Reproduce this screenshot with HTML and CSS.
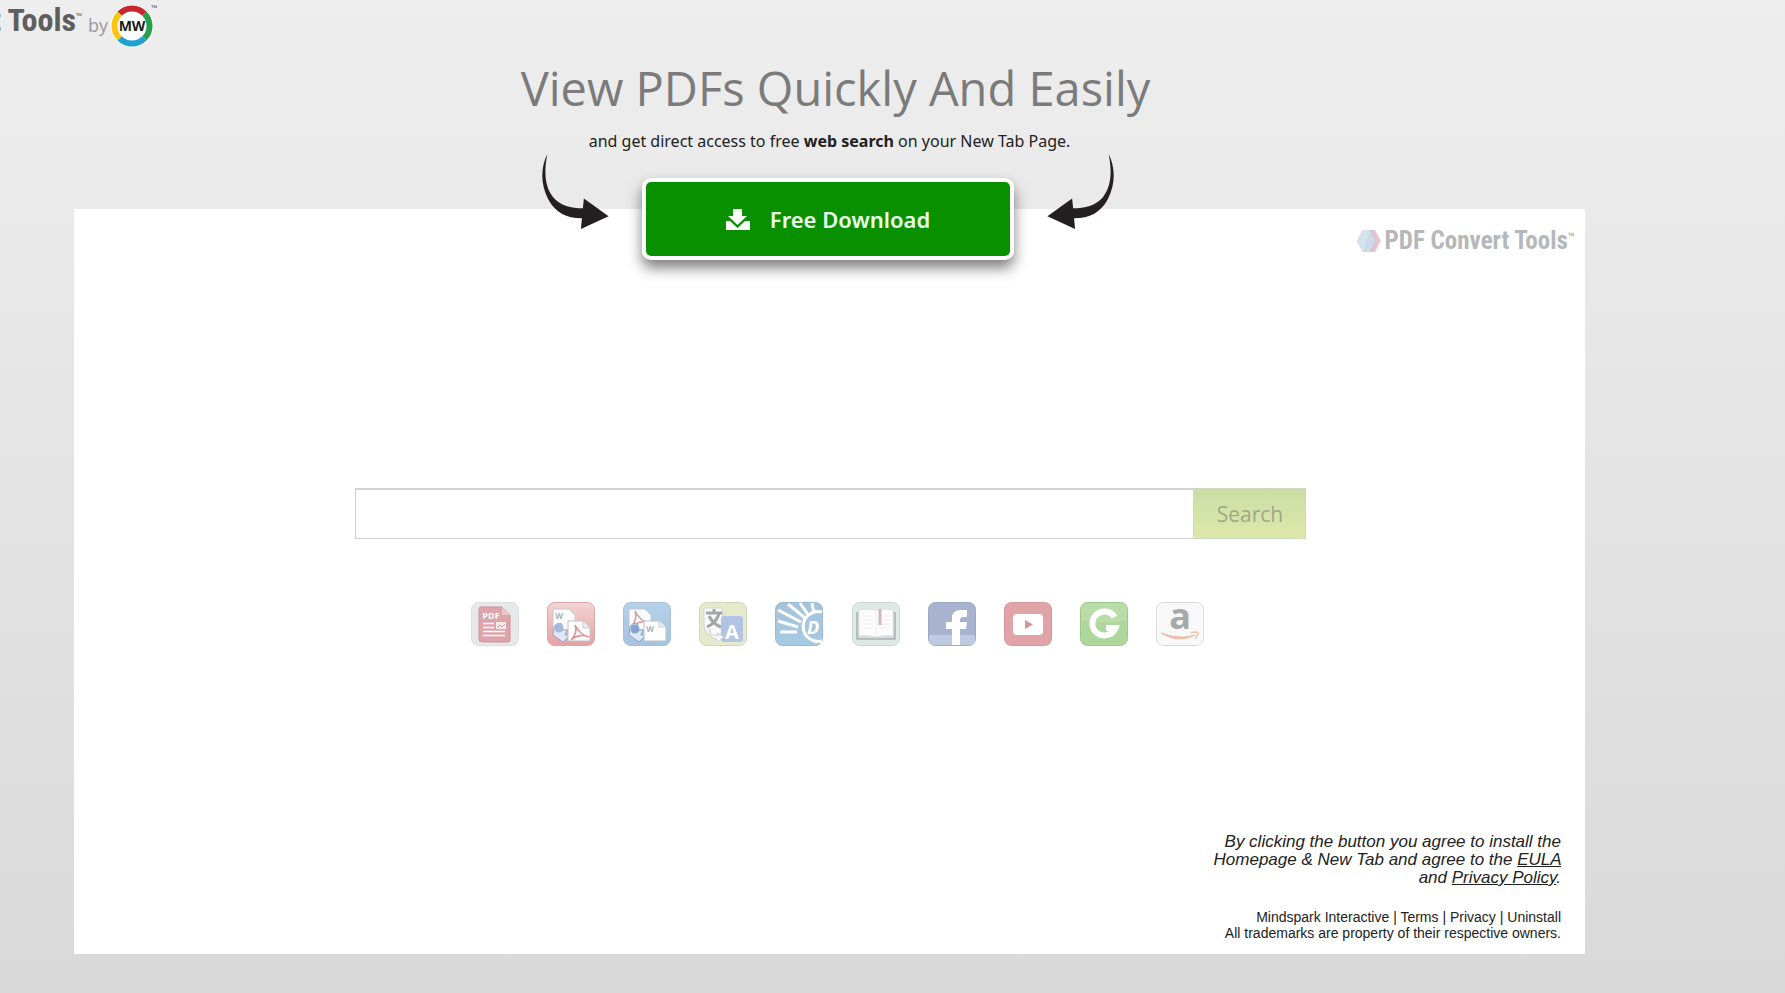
FILE: index.html
```html
<!DOCTYPE html>
<html lang="en">
<head>
<meta charset="utf-8">
<title>PDF Convert Tools</title>
<link rel="stylesheet" href="styles.css">
</head>
<body>
<header class="topbar">
  <div class="topbar-name"><span>PDF Convert Tools</span></div>
  <sup class="tm">™</sup>
  <span class="by">by</span>
  <svg class="mw" viewBox="0 0 44 44" role="img" aria-label="MW">
    <circle cx="22" cy="22" r="21.500" fill="#fff"/>
    <g fill="none" stroke-width="6">
      <path d="M9.600 9.600A17.500 17.500 0 0 1 34.400 9.600" stroke="#c9252c"/>
      <path d="M34.400 9.600A17.500 17.500 0 0 1 34.400 34.400" stroke="#2a9f4b"/>
      <path d="M34.400 34.400A17.500 17.500 0 0 1 9.600 34.400" stroke="#21a0d2"/>
      <path d="M9.600 34.400A17.500 17.500 0 0 1 9.600 9.600" stroke="#fbc40f"/>
    </g>
    <text x="22" y="27" class="mw-text">MW</text>
  </svg>
  <sup class="tm">™</sup>
</header>

<main class="page">
  <section class="hero">
    <h1 class="title">View PDFs Quickly And Easily</h1>
    <p class="subtitle">and get direct access to free <strong>web search</strong> on your New Tab Page.</p>
    <div class="cta">
      <svg class="arrow" viewBox="0 0 70 78" aria-hidden="true"><path d="M7 1C3 21 5 35 13 45C20 53 31 56 43 56L44 46L69 64L41 77L42 66C26 66 15 60 8 47C-1 30 1 13 7 1Z"/></svg>
      <button class="download" type="button">
        <svg class="download-icon" viewBox="0 0 24 21" aria-hidden="true"><path d="M7 0h9v7h5l-9.500 9L2 7h5zM0 12h4l7.500 7 7.500-7h5v9H0z"/></svg>
        <span>Free Download</span>
      </button>
      <svg class="arrow arrow-right" viewBox="0 0 70 78" aria-hidden="true"><path d="M7 1C3 21 5 35 13 45C20 53 31 56 43 56L44 46L69 64L41 77L42 66C26 66 15 60 8 47C-1 30 1 13 7 1Z"/></svg>
    </div>
  </section>

  <section class="panel">
    <div class="brand">
      <svg class="hex" viewBox="0 0 24 22" aria-hidden="true">
        <path d="M6 0H18L24 11L18 22H6L0 11Z" fill="#ebc6cc"/>
        <path d="M6 0H16L21 11L16 22H6L0 11Z" fill="#d9c3d0"/>
        <path d="M6 0H13L18 11L13 22H6L0 11Z" fill="#cbd9e9"/>
        <path d="M6 0H13L6 22L0 11Z" fill="#d5e3ef"/>
      </svg>
      <span>PDF Convert Tools</span><sup class="brand-tm">™</sup>
    </div>

    <form class="search">
      <input class="search-input" type="text" aria-label="Search the web">
      <button class="search-button" type="button">Search</button>
    </form>

    <nav class="apps" aria-label="Shortcuts">
      <a href="#" aria-label="View PDF"><svg viewBox="0 0 48 44">
        <rect x=".5" y=".5" width="47" height="43" rx="7" fill="#e7e8ea" stroke="#dcdfe1"/>
        <path d="M9 5H31L39 13V38Q39 40 37 40H11Q8 40 8 37V7Z" fill="#dda4ac" stroke="#cf929b"/>
        <path d="M31 5V13H39Z" fill="#edc8cc"/>
        <text x="20" y="17" class="i-pdf">PDF</text>
        <path d="M12 21.500H23M12 25.500H23M12 29.500H34M12 33.500H34" stroke="#fff" stroke-width="1.500"/>
        <rect x="25" y="20" width="10" height="7" fill="#f8e9eb"/><path d="M26 26L29 23L31 25L34 22" fill="none" stroke="#d9a0a8"/>
      </svg></a>
      <a href="#" aria-label="Word to PDF"><svg viewBox="0 0 48 44">
        <defs><linearGradient id="red" x2="0" y2="1"><stop stop-color="#f3d5d5"/><stop offset="1" stop-color="#e4a1a2"/></linearGradient></defs>
        <rect x=".5" y=".5" width="47" height="43" rx="7" fill="url(#red)" stroke="#dba6a8"/>
        <path d="M6 7H22L28 13V28H6Z" fill="#fbfbfc" stroke="#c9c7ca"/>
        <text x="12" y="17" class="i-w">W</text>
        <path d="M7 25Q9 20 15 22L13 28H20L18 33H23L16 40L6 33Z" fill="#dfe7f4" stroke="#9daac6"/><circle cx="12" cy="26" r="4.500" fill="#a7b9dd"/>
        <path d="M21 19H36L43 26V39H21Z" fill="#fff" stroke="#c4c0c5"/><path d="M36 19V26H43" fill="#eee" stroke="#ccc"/>
        <path d="M24 38C29 33 30 28 28 23C32 31 37 34 42 35C35 32 28 34 24 38Z" fill="none" stroke="#d99399" stroke-width="1.600"/>
      </svg></a>
      <a href="#" aria-label="PDF to Word"><svg viewBox="0 0 48 44">
        <defs><linearGradient id="blue" x2="0" y2="1"><stop stop-color="#b5d1eb"/><stop offset="1" stop-color="#a5c3e0"/></linearGradient></defs>
        <rect x=".5" y=".5" width="47" height="43" rx="7" fill="url(#blue)" stroke="#a9bed1"/>
        <path d="M6 7H22L28 13V28H6Z" fill="#fbfbfc" stroke="#c3c7cf"/>
        <path d="M8 26C13 19 14 14 12 9C16 17 21 20 26 21C19 18 12 21 8 26Z" fill="none" stroke="#d99da6" stroke-width="1.600"/>
        <path d="M7 25Q9 20 15 22L13 28H20L18 33H23L16 40L6 33Z" fill="#dce8f5" stroke="#89a3c5"/><circle cx="12" cy="27" r="4.500" fill="#87a4cf"/>
        <path d="M21 19H36L43 25V39H21Z" fill="#fff" stroke="#b9c2cc"/><path d="M36 19V25H43" fill="#eee" stroke="#ccc"/>
        <text x="27" y="30" class="i-w">W</text>
      </svg></a>
      <a href="#" aria-label="Translate"><svg viewBox="0 0 48 44">
        <rect x=".5" y=".5" width="47" height="43" rx="7" fill="#e7e9cd" stroke="#d0d6bb"/>
        <path d="M5 6H23L25 25Q26 28 22 31L16 35Q6 33 5 23Z" fill="#fafafa" stroke="#d3d6d1"/>
        <rect x="22" y="14" width="22" height="26" rx="3" fill="#b1c4e3"/>
        <path d="M7 11H23M15 7V11M20 12Q17 21 8 25M10 14Q14 22 22 25" fill="none" stroke="#a3a5a7" stroke-width="3"/>
        <path d="M11 27Q10 34 20 34L18 31L25 35L18 40V37Q9 35 11 27Z" fill="#fff" stroke="#c8cdd6" stroke-width=".8"/>
        <text x="33" y="37" class="i-a">A</text>
      </svg></a>
      <a href="#" aria-label="Dictionary"><svg viewBox="0 0 48 44">
        <defs><linearGradient id="sky" x2="0" y2="1"><stop stop-color="#a6c2dc"/><stop offset="1" stop-color="#a4cbe2"/></linearGradient></defs>
        <rect x=".5" y=".5" width="47" height="43" rx="7" fill="url(#sky)" stroke="#9ab9d0"/>
        <path d="M47 10A15 15 0 1 0 47 39" fill="none" stroke="#fff" stroke-width="3"/>
        <path d="M5 30H22M3 19L23 25M3 8L26 20M13 2L30 16M25 1L34 14M37 1L39 11" stroke="#fff" stroke-width="3"/>
        <text x="38" y="32" class="i-d">D</text>
      </svg></a>
      <a href="#" aria-label="Reference book"><svg viewBox="0 0 48 44">
        <rect x=".5" y=".5" width="47" height="43" rx="7" fill="#dfe9e5" stroke="#c6d8d1"/>
        <path d="M5 10V37H43V10" fill="#d5dbd9" stroke="#a9b2b2" stroke-width="1.500"/>
        <path d="M7 8Q17 6 24 8Q32 6 41 8V34Q32 33 24 35Q16 33 7 34Z" fill="#fdfdfd" stroke="#dcdfe0"/>
        <path d="M24 9V35M11 14H21M11 18H21M11 22H21M11 26H21M32 14H38M32 18H38M27 22H38M27 26H38" stroke="#ececef"/>
        <path d="M28 7V23" stroke="#d5b5bd" stroke-width="3"/>
      </svg></a>
      <a href="#" aria-label="Facebook"><svg viewBox="0 0 48 44">
        <rect x=".5" y=".5" width="47" height="43" rx="7" fill="#a7b3cf" stroke="#9ba9c5"/>
        <path d="M1 33H47V37Q47 43 41 43H7Q1 43 1 37Z" fill="#becae0"/>
        <path d="M24 43V27H18V20H24V16Q24 8 33 8H39V15H35Q32 15 32 18V20H39L38 27H32V43Z" fill="#fff"/>
      </svg></a>
      <a href="#" aria-label="YouTube"><svg viewBox="0 0 48 44">
        <rect x=".5" y=".5" width="47" height="43" rx="7" fill="#e0a3a7" stroke="#d0989c"/>
        <rect x="9" y="12" width="30" height="21" rx="4" fill="#fff"/><path d="M21 18L29 22.500L21 27Z" fill="#d3939a"/>
      </svg></a>
      <a href="#" aria-label="Groupon"><svg viewBox="0 0 48 44">
        <rect x=".5" y=".5" width="47" height="43" rx="7" fill="#add79c" stroke="#9fc790"/>
        <path d="M1 8Q1 1 8 1H40Q47 1 47 8V18Q24 23 1 18Z" fill="#badca9"/>
        <path d="M34.500 15A12 12 0 1 0 35.500 26H26" fill="none" stroke="#fff" stroke-width="6"/>
      </svg></a>
      <a href="#" aria-label="Amazon"><svg viewBox="0 0 48 44">
        <rect x=".5" y=".5" width="47" height="43" rx="7" fill="#f8f8f8" stroke="#dcdcdf"/>
        <text x="24" y="27" class="i-amazon">a</text>
        <path d="M5 31Q23 42 39 33Q24 38 5 31Z" fill="#edbea6" stroke="#edbea6"/><path d="M35 31Q40 29 42 31Q42 34 39 37" fill="none" stroke="#edc4af" stroke-width="1.500"/>
      </svg></a>
    </nav>

    <footer class="footer">
      <p class="agree">By clicking the button you agree to install the Homepage &amp; New Tab and agree to the <a href="#">EULA</a> and <a href="#">Privacy Policy</a>.</p>
      <p class="links"><a href="#">Mindspark Interactive</a> | <a href="#">Terms</a> | <a href="#">Privacy</a> | <a href="#">Uninstall</a><br>All trademarks are property of their respective owners.</p>
    </footer>
  </section>
</main>
</body>
</html>
```
FILE: styles.css
```css
* { box-sizing: border-box; }

body {
  margin: 0;
  min-height: 100vh;
  display: flex;
  flex-direction: column;
  background: linear-gradient(#eeeeee, #d9d9d9);
  color: #222;
  font-family: "Open Sans", "Noto Sans", sans-serif;
}

h1, p { margin: 0; }

/* Top bar */
.topbar {
  display: flex;
  align-items: flex-start;
  height: 56px;
  padding-top: 4px;
}
.topbar-name {
  display: flex;
  justify-content: flex-end;
  width: 76px;
  overflow: hidden;
  color: #5e5e5e;
  font: bold 32px/32px "Liberation Sans Narrow", "Roboto Condensed", "Liberation Sans", sans-serif;
  white-space: nowrap;
}
.tm { font-size: 8px; line-height: 8px; color: #555; }
.topbar-name + .tm { margin-top: 8px; }
.by { margin-left: 6px; font-size: 18px; line-height: 42px; color: #999; }
.mw { width: 44px; height: 44px; margin-left: 2px; }
.mw-text {
  font: bold 14px "Open Sans", sans-serif;
  text-anchor: middle;
  fill: #1b1b1b;
}
.mw + .tm { margin-left: -3px; }

/* Page column */
.page {
  flex: 1;
  display: flex;
  flex-direction: column;
  margin: 0 200px 39px 74px;
}

.hero {
  z-index: 1;
  display: flex;
  flex-direction: column;
  align-items: center;
  margin-bottom: -51px;
}
.title {
  padding-left: 12px;
  color: #7b7b7b;
  font-size: 47px;
  font-weight: 400;
  line-height: 64px;
}
.subtitle {
  margin-top: 9px;
  font-family: "Noto Sans", "Open Sans", sans-serif;
  font-size: 16px;
  line-height: 24px;
}

.cta {
  display: flex;
  align-items: flex-start;
  gap: 32px;
  margin-right: 3px;
}
.arrow { width: 70px; height: 77px; fill: #231f20; }
.arrow-right { transform: scaleX(-1); }
.download {
  display: flex;
  align-items: center;
  justify-content: center;
  gap: 20px;
  width: 372px;
  height: 82px;
  margin-top: 25px;
  border: 4px solid #fff;
  border-radius: 9px;
  background: #089000;
  box-shadow: 0 8px 14px rgba(0, 0, 0, .5);
  color: #eaffea;
  font: 600 22px/28px "Noto Sans", "Open Sans", sans-serif;
}
.download-icon { width: 24px; height: 21px; fill: #fff; }

/* Preview panel */
.panel {
  flex: 1;
  display: flex;
  flex-direction: column;
  align-items: center;
  background: #fff;
}
.brand {
  display: flex;
  align-self: flex-end;
  align-items: center;
  margin: 16px 10px 0 0;
  color: #b5b7b9;
  font: bold 25px/32px "Liberation Sans Narrow", "Roboto Condensed", "Liberation Sans", sans-serif;
}
.hex { width: 24px; height: 22px; margin-right: 4px; }
.brand-tm { align-self: flex-start; margin-top: 6px; font-size: 13px; line-height: 13px; }

.search {
  display: flex;
  width: 63%;
  height: 51px;
  margin: 231px 0 0 2px;
}
.search-input {
  flex: 1;
  min-width: 0;
  padding: 0 12px;
  border: 1px solid #d0d0d0;
  border-top: 2px solid #d3d3d3;
  border-right: 0;
  background: #fff;
  font: 20px "Open Sans", sans-serif;
}
.search-button {
  width: 113px;
  border: 1px solid #c9dcc0;
  background: linear-gradient(#cbdda5, #dfe8a9);
  color: #a0a789;
  font: 21px "Open Sans", sans-serif;
}

.apps {
  display: flex;
  justify-content: space-between;
  width: 734px;
  margin: 63px 0 0 16px;
}
.apps a, .apps svg { display: block; width: 48px; height: 44px; }
.apps svg { overflow: visible; }
.i-pdf { font: bold 9px "Open Sans", sans-serif; text-anchor: middle; fill: #fff; }
.i-w { font: bold 8px "Open Sans", sans-serif; text-anchor: middle; fill: #a4b3bd; }
.i-a { font: bold 20px "Open Sans", sans-serif; text-anchor: middle; fill: #fff; }
.i-d { font: italic bold 18px "Open Sans", sans-serif; text-anchor: middle; fill: #fff; }
.i-amazon { font: bold 36px "Open Sans", sans-serif; text-anchor: middle; fill: #a8a8a8; }

/* Legal text */
.footer {
  align-self: flex-end;
  width: 350px;
  margin: auto 24px 13px 0;
  color: #222;
  font-family: "Liberation Sans", Arial, sans-serif;
  text-align: right;
}
.agree { font-size: 17px; font-style: italic; line-height: 18px; }
.links { margin-top: 22px; font-size: 14px; line-height: 16px; }
.footer a { color: inherit; }
.links a { text-decoration: none; }
```
